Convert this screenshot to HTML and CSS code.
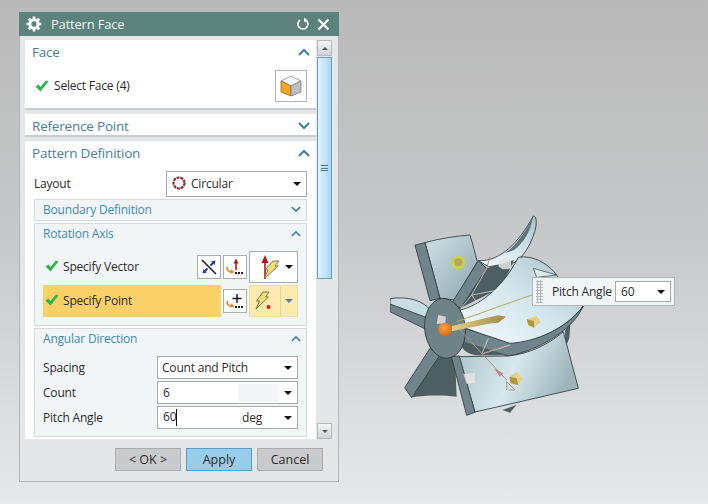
FILE: index.html
```html
<!DOCTYPE html>
<html lang="en">
  <head>
    <meta charset="UTF-8" />
    <title>Pattern Face</title>
    <link rel="stylesheet" href="styles.css">
  </head>
  <body>
    <!-- dialog window -->
    <div class="dialog">
      <div class="titlebar">
        <svg class="gear" width="16" height="16" viewBox="0 0 14 14">
          <path class="gear-teeth" d="M7 0.500v2.500M7 11v2.500M0.500 7h2.500M11 7h2.500M2.400 2.400l1.800 1.800M9.800 9.800l1.800 1.800M2.400 11.600l1.800-1.800M9.800 4.200l1.800-1.800" />
          <circle class="gear-ring" cx="7" cy="7" r="3.600" />
        </svg>
        <span class="dialog-title">Pattern Face</span>
        <svg class="reset" width="14" height="14" viewBox="0 0 14 14">
          <path class="title-stroke" d="M9.500 2.800A5 5 0 1 1 4 3" />
          <path class="title-fill" d="M8 0.500v5l3.400-2.200z" />
        </svg>
        <svg class="close" width="13" height="13" viewBox="0 0 13 13">
          <path class="close-x" d="M1.500 1.500l10 10M11.500 1.500l-10 10" />
        </svg>
      </div>

      <div class="main">
        <div class="panel">
          <section class="section section-face">
            <div class="section-head">
              <span>Face</span>
              <svg class="chev" width="12" height="8" viewBox="0 0 12 8"><path d="M1 7l5-5 5 5" /></svg>
            </div>
            <div class="face-row">
              <svg class="check" width="14" height="12" viewBox="0 0 14 12"><path d="M0.500 6.500l3-2 2 2.500L11 0.500l2.500 1L5.500 11.500z" /></svg>
              <span class="face-label">Select Face (4)</span>
              <div class="cube-btn">
                <svg width="24" height="24" viewBox="0 0 24 24">
                  <path class="cube-top" d="M12 2l10 5-10 5L2 7z" />
                  <path class="cube-left" d="M2 7l10 5v10L2 18z" />
                  <path class="cube-right" d="M22 7l-10 5v10l10-4z" />
                </svg>
              </div>
            </div>
          </section>

          <section class="section">
            <div class="section-head">
              <span>Reference Point</span>
              <svg class="chev" width="12" height="8" viewBox="0 0 12 8"><path d="M1 1l5 5 5-5" /></svg>
            </div>
          </section>

          <section class="section section-pattern">
            <div class="section-head">
              <span>Pattern Definition</span>
              <svg class="chev" width="12" height="8" viewBox="0 0 12 8"><path d="M1 7l5-5 5 5" /></svg>
            </div>
            <div class="layout-row">
              <span class="layout-label">Layout</span>
              <div class="field field-layout">
                <svg class="ring" width="16" height="16" viewBox="0 0 16 16">
                  <circle cx="8" cy="8" r="5.500" />
                </svg>
                <span>Circular</span>
                <i class="caret"></i>
              </div>
            </div>

            <div class="group group-closed">
              <div class="group-head">
                <span>Boundary Definition</span>
                <svg class="chev" width="10" height="7" viewBox="0 0 12 8"><path d="M1 1l5 5 5-5" /></svg>
              </div>
            </div>

            <div class="group group-axis">
              <div class="group-head">
                <span>Rotation Axis</span>
                <svg class="chev" width="10" height="7" viewBox="0 0 12 8"><path d="M1 7l5-5 5 5" /></svg>
              </div>
              <div class="axis-row">
                <div class="axis-label">
                  <svg class="check" width="14" height="12" viewBox="0 0 14 12"><path d="M0.500 6.500l3-2 2 2.500L11 0.500l2.500 1L5.500 11.500z" /></svg>
                  <span>Specify Vector</span>
                </div>
                <div class="tool">
                  <svg width="20" height="20" viewBox="0 0 20 20">
                    <path class="ico-black" d="M3 3l14 14" />
                    <path class="ico-blue" d="M16.500 3.500l-4.500 1 3.500 3.500zM3.500 16.500l4.500-1-3.500-3.500z" />
                    <path class="ico-blue-line" d="M14 6l-2.500 2.500M6 14l2.500-2.500" />
                  </svg>
                </div>
                <div class="tool">
                  <svg width="20" height="20" viewBox="0 0 20 20">
                    <path class="ico-orange" d="M2 10c0 4 2 5 5 5M5 16l3-1-2-2" />
                    <path class="ico-red" d="M11 13V6" />
                    <path class="ico-red-fill" d="M11 1.500l-2.500 5h5z" />
                    <path class="ico-dots" d="M10 16h2M13 16h2M16 16h2" />
                  </svg>
                </div>
                <div class="tool tool-wide">
                  <svg width="30" height="30" viewBox="0 0 30 30">
                    <path class="ico-red" d="M11 27V9" />
                    <path class="ico-red-fill" d="M11 3l-3.500 8h7z" />
                    <path class="bolt" d="M19 9h6l-4 5h3L10 27l4-9h-3z" />
                  </svg>
                  <i class="caret caret-tool"></i>
                </div>
              </div>
              <div class="axis-row">
                <div class="axis-label axis-active">
                  <svg class="check" width="14" height="12" viewBox="0 0 14 12"><path d="M0.500 6.500l3-2 2 2.500L11 0.500l2.500 1L5.500 11.500z" /></svg>
                  <span>Specify Point</span>
                </div>
                <div class="tool">
                  <svg width="20" height="20" viewBox="0 0 20 20">
                    <path class="ico-orange" d="M2 10c0 4 2 5 5 5M5 16l3-1-2-2" />
                    <path class="ico-black" d="M12 3v9M7.500 7.500h9" />
                    <path class="ico-dots" d="M10 16h2M13 16h2M16 16h2" />
                  </svg>
                </div>
                <div class="tool-split">
                  <div class="split-main">
                    <svg width="24" height="28" viewBox="0 0 24 28">
                      <path class="bolt" d="M10 5h6l-3.500 5h3L3 22l3.500-8h-3z" />
                      <circle class="ico-dot" cx="15.500" cy="20" r="2" />
                    </svg>
                  </div>
                  <div class="split-arrow"><i class="caret caret-blue"></i></div>
                </div>
              </div>
            </div>

            <div class="group group-angular">
              <div class="group-head">
                <span>Angular Direction</span>
                <svg class="chev" width="10" height="7" viewBox="0 0 12 8"><path d="M1 7l5-5 5 5" /></svg>
              </div>
              <div class="form-row">
                <span>Spacing</span>
                <div class="field field-form"><span>Count and Pitch</span><i class="caret"></i></div>
              </div>
              <div class="form-row">
                <span>Count</span>
                <div class="field field-form">
                  <span class="value">6</span>
                  <i class="patch"></i>
                  <i class="caret"></i>
                </div>
              </div>
              <div class="form-row">
                <span>Pitch Angle</span>
                <div class="field field-form">
                  <span class="value value-edit">60</span>
                  <span class="unit">deg</span>
                  <i class="caret"></i>
                </div>
              </div>
            </div>
          </section>
        </div>

        <div class="scrollbar">
          <div class="scroll-btn"><i class="scroll-up"></i></div>
          <div class="scroll-thumb"><i class="grip"></i></div>
          <div class="scroll-track"></div>
          <div class="scroll-btn"><i class="scroll-down"></i></div>
        </div>
      </div>

      <div class="footer">
        <button class="btn">&lt; OK &gt;</button>
        <button class="btn btn-apply">Apply</button>
        <button class="btn">Cancel</button>
      </div>
    </div>

    <!-- impeller model, coordinates are 3x screen pixels -->
    <svg class="model" width="300" height="230" viewBox="0 0 900 690">
      <defs>
        <linearGradient id="blade" x1="0" y1="0" x2="1" y2="0.300">
          <stop offset="0" stop-color="#a9bfc6" />
          <stop offset="0.550" stop-color="#d6e8ee" />
          <stop offset="1" stop-color="#9fb5bc" />
        </linearGradient>
        <linearGradient id="bladeBack" x1="0" y1="0" x2="1" y2="1">
          <stop offset="0" stop-color="#cfe2e8" />
          <stop offset="1" stop-color="#8fa6ad" />
        </linearGradient>
        <linearGradient id="curve" x1="0" y1="1" x2="1" y2="0">
          <stop offset="0" stop-color="#f4fbfd" />
          <stop offset="0.500" stop-color="#d5e7ee" />
          <stop offset="1" stop-color="#a8c0c8" />
        </linearGradient>
        <linearGradient id="cone" x1="0" y1="0" x2="1" y2="0">
          <stop offset="0" stop-color="#e6cf84" />
          <stop offset="1" stop-color="#a08a45" />
        </linearGradient>
        <radialGradient id="ball" cx="0.400" cy="0.350" r="0.700">
          <stop offset="0" stop-color="#f7a44a" />
          <stop offset="1" stop-color="#d96a08" />
        </radialGradient>
      </defs>

      <!-- back blades -->
      <path class="dark" d="M338 630l42-16-20 24z" />
      <path class="dark" d="M525 392l17-28-4 50-12 30z" />
      <path class="face-back" d="M105 128C150 115 200 108 240 105C248 130 255 160 262 185L195 300L150 295z" />
      <path class="edge" d="M75 135L105 128L150 295L120 302z" />

      <!-- curved blade, top right -->
      <path class="face-curve" d="M265 182C330 185 385 130 430 48C442 50 440 75 434 95C420 140 400 170 372 188L296 200z" />
      <path class="edge-soft" d="M345 160C380 135 410 90 430 48C422 95 400 130 372 150z" />
      <path class="dark" d="M290 205L372 180L335 262L205 328z" />

      <!-- large curved blade -->
      <path class="face-curve" d="M385 172C430 165 480 190 510 240C530 270 560 300 578 320C545 365 470 420 360 435L215 380L210 330C260 320 335 270 385 172z" />
      <path class="edge" d="M225 385L360 430C440 425 530 385 580 318L565 345C530 395 450 450 355 468L222 432z" />

      <!-- lower blades -->
      <path class="dark" d="M65 592C110 585 160 585 200 590L195 470L145 470z" />
      <path class="edge" d="M44 563L120 445L148 468L65 593z" />
      <path class="face-bottom" d="M206 470L354 468C420 462 480 430 520 395L565 565L255 636z" />
      <path class="edge" d="M184 470L208 468L255 637L230 646z" />
      <path class="dark" d="M205 420L355 466L280 466C250 468 225 458 215 440z" />

      <!-- left blade -->
      <path class="edge" d="M0 310L120 350L108 388L0 335z" />
      <path class="face-left" d="M0 296C50 288 100 300 122 332L108 352L0 312z" />

      <!-- blade running from hub to top -->
      <path class="edge" d="M185 310L265 182L290 205L212 325z" />

      <!-- hub -->
      <ellipse class="hub" cx="165" cy="385" rx="61" ry="90" transform="rotate(-6 165 385)" />

      <!-- handles -->
      <path class="line-white" d="M290 205L245 285L212 325M245 285L335 268M245 285L320 395M360 435L275 462L295 415M330 268L300 335" />
      <path class="line-olive" d="M200 365L430 283" />
      <path class="line-pink" d="M205 385L350 540M300 170L290 205L275 225M355 570L375 570L350 545V570M275 462L350 435" />
      <path class="tri" d="M430 205L500 225L440 232z" />
      <path class="cone" d="M185 378L305 350L325 346L348 350L325 368L305 370L185 394z" />
      <path class="cone-pink" d="M312 505L340 520L330 530z" />

      <circle class="knob-lime" cx="205" cy="188" r="21" />
      <circle class="knob-tan" cx="205" cy="187" r="12" />

      <path class="block" d="M326 180L350 174L363 182V206L338 208L326 200z" />
      <path class="block" d="M220 522L255 520V548L230 552z" />
      <path class="block" d="M145 345L168 350L165 370L140 372z" />

      <path class="gold-a" d="M410 358L440 347L452 366L432 383L415 375z" />
      <path class="gold-b" d="M410 358L432 363L432 383L415 375z" />
      <path class="gold-a" d="M358 530L380 516L398 535L385 555L362 550z" />
      <path class="gold-b" d="M358 530L380 535L385 555L362 550z" />

      <circle cx="165" cy="388" r="20" fill="url(#ball)" />
    </svg>

    <!-- floating input -->
    <div class="popup">
      <i class="popup-grip"></i>
      <span class="popup-label">Pitch Angle</span>
      <div class="field field-popup"><span class="value">60</span><i class="caret"></i></div>
    </div>
  </body>
</html>
```

FILE: styles.css
```css
* {
  box-sizing: border-box;
}

html,
body {
  height: 504px;
}

body {
  margin: 0;
  position: relative;
  overflow: hidden;
  background: linear-gradient(#b9b9b9, #c6c7c8 45%, #e6e8e9);
  font-family: "Open Sans", "Noto Sans", sans-serif;
  font-size: 12px;
  letter-spacing: -0.2px;
  color: #2b2b2b;
}

svg {
  display: block;
  flex: none;
}

/* dialog */
.dialog {
  position: absolute;
  left: 19px;
  top: 12px;
  width: 320px;
  height: 470px;
  display: flex;
  flex-direction: column;
  background: #e4e6e8;
  border: 1px solid #aeb4b7;
  border-top: 0;
}

.titlebar {
  height: 24px;
  margin: 0 -1px;
  display: flex;
  align-items: center;
  padding: 0 9px 0 7px;
  background: #5b827b;
  color: #f1f5f4;
}

.dialog-title {
  margin-left: 9px;
  font-size: 13px;
  flex: 1;
}

.gear-teeth {
  stroke: #fff;
  stroke-width: 2.400;
  fill: none;
}

.gear-ring {
  stroke: #fff;
  stroke-width: 2.600;
  fill: #5b827b;
}

.title-stroke {
  stroke: #fff;
  stroke-width: 1.600;
  fill: none;
}

.title-fill {
  fill: #fff;
}

.reset {
  margin-right: 7px;
}

.close-x {
  stroke: #fff;
  stroke-width: 2.200;
  fill: none;
}

.main {
  display: flex;
  padding: 4px 0 0 5px;
  height: 403px;
}

.panel {
  width: 291px;
  display: flex;
  flex-direction: column;
  gap: 4px;
}

.section {
  background: #fff;
  border-bottom: 2px solid #c9cdd0;
  height: 23px;
}

.section-face {
  height: 70px;
}

.section-pattern {
  flex: 1;
  border-bottom: 0;
  padding: 0 9px;
}

.section-head {
  height: 24px;
  display: flex;
  align-items: center;
  justify-content: space-between;
  padding: 0 6px 0 7px;
  font-size: 13.500px;
  color: #4a8096;
}

.section-pattern .section-head {
  margin: 0 -9px;
}

.chev path {
  fill: none;
  stroke: #3f7ea3;
  stroke-width: 2;
}

.face-row {
  display: flex;
  align-items: center;
  padding: 6px 9px 0 10px;
}

.face-label {
  margin-left: 5px;
  flex: 1;
  padding-bottom: 1px;
}

.check path {
  fill: #2bb54a;
}

.cube-btn {
  width: 32px;
  height: 32px;
  border: 1px solid #b4b4b4;
  display: flex;
  align-items: center;
  justify-content: center;
}

.cube-top {
  fill: #f4f4f4;
  stroke: #8c8c8c;
  stroke-width: 0.800;
}

.cube-left {
  fill: #f5a623;
  stroke: #8c6a3c;
  stroke-width: 0.800;
}

.cube-right {
  fill: #bdbfc4;
  stroke: #7c7c7c;
  stroke-width: 0.800;
}

/* inputs */
.layout-row {
  display: flex;
  align-items: center;
  justify-content: space-between;
  height: 26px;
  margin: 6px 0 2px;
}

.layout-label {
  padding-bottom: 2px;
}

.field {
  display: flex;
  align-items: center;
  position: relative;
  background: #fff;
  border: 1px solid #a8a8a8;
  padding-left: 4px;
  padding-bottom: 1px;
}

.field-layout {
  width: 141px;
  height: 26px;
  padding-bottom: 2px;
}

.field-form {
  width: 141px;
  height: 23px;
}

.ring {
  margin-right: 4px;
}

.ring circle {
  fill: none;
  stroke: #8a2a2a;
  stroke-width: 2.200;
  stroke-dasharray: 3 0.800;
}

.caret {
  position: absolute;
  right: 5px;
  top: 50%;
  margin-top: -2px;
  border-style: solid;
  border-width: 4px 4px 0;
  border-color: #111 transparent transparent;
}

.caret-blue {
  border-top-color: #4b84a8;
  right: 4px;
}

.caret-tool {
  right: 4px;
}

.value {
  padding-left: 1px;
}

.value-edit {
  border-right: 1px solid #111;
  height: 17px;
  line-height: 16px;
}

.unit {
  position: absolute;
  left: 84px;
}

.patch {
  position: absolute;
  left: 80px;
  top: 2px;
  width: 41px;
  height: 18px;
  background: #f3f5f6;
}

/* inner groups */
.group {
  background: #f2f5f6;
  border: 1px solid #d5dadd;
  margin-bottom: 2px;
}

.group-closed {
  height: 22px;
}

.group-axis {
  height: 103px;
}

.group-angular {
  height: 109px;
}

.group-head {
  height: 20px;
  display: flex;
  align-items: center;
  justify-content: space-between;
  padding: 0 5px 2px 8px;
  color: #3f8bb3;
}

.group-axis .group-head {
  margin-bottom: 7px;
}

.group-angular .group-head {
  margin-bottom: 7px;
}

.axis-row {
  display: flex;
  align-items: center;
  gap: 2px;
  height: 32px;
  margin: 0 0 2px 8px;
}

.axis-label {
  width: 152px;
  height: 32px;
  display: flex;
  align-items: center;
  gap: 4px;
  padding: 0 0 2px 2px;
}

.axis-active {
  width: 178px;
  background: #fad167;
}

.tool {
  width: 24px;
  height: 24px;
  background: #fff;
  border: 1px solid #a9aeb3;
  display: flex;
  align-items: center;
  justify-content: center;
  position: relative;
}

.tool-wide {
  width: 49px;
  height: 32px;
  justify-content: flex-start;
  padding-left: 4px;
}

.tool-split {
  width: 49px;
  height: 32px;
  display: flex;
  background: #fdeab0;
  border: 1px solid #f2dc9e;
}

.split-main {
  width: 31px;
  border-right: 1px solid #ecd28c;
  display: flex;
  align-items: center;
  justify-content: center;
}

.split-arrow {
  flex: 1;
  position: relative;
}

.ico-black {
  stroke: #111;
  stroke-width: 1.400;
  fill: none;
}

.ico-blue {
  fill: #1c3aa8;
}

.ico-blue-line {
  stroke: #1c3aa8;
  stroke-width: 2;
  fill: none;
}

.ico-orange {
  stroke: #e8872a;
  stroke-width: 1.600;
  fill: none;
}

.ico-red {
  stroke: #b01818;
  stroke-width: 1.600;
  fill: none;
}

.ico-red-fill {
  fill: #b01818;
}

.ico-dots {
  stroke: #222;
  stroke-width: 2;
  fill: none;
}

.ico-dot {
  fill: #cf1f1f;
}

.bolt {
  fill: #efe07a;
  stroke: #6f6a3a;
  stroke-width: 0.900;
}

.form-row {
  display: flex;
  align-items: center;
  justify-content: space-between;
  height: 23px;
  margin: 0 8px 2px;
}

/* scrollbar */
.scrollbar {
  width: 15px;
  margin-left: 1px;
  display: flex;
  flex-direction: column;
}

.scroll-btn {
  height: 16px;
  background: linear-gradient(#f5f6f7, #cfd2d4);
  border: 1px solid #b5b9bc;
  display: flex;
  align-items: center;
  justify-content: center;
}

.scroll-up {
  border-style: solid;
  border-width: 0 3px 3px;
  border-color: transparent transparent #555;
}

.scroll-down {
  border-style: solid;
  border-width: 3px 3px 0;
  border-color: #555 transparent transparent;
}

.scroll-thumb {
  height: 222px;
  margin-top: 1px;
  background: linear-gradient(90deg, #e3f2fc, #a9d6f5);
  border: 1px solid #6d9dc0;
  display: flex;
  align-items: center;
  justify-content: center;
}

.grip {
  width: 7px;
  height: 6px;
  border-top: 1px solid #4f7f9f;
  border-bottom: 1px solid #4f7f9f;
  background: linear-gradient(#4f7f9f, #4f7f9f) center / 100% 1px no-repeat;
}

.scroll-track {
  flex: 1;
}

/* bottom buttons */
.footer {
  display: flex;
  justify-content: flex-end;
  gap: 5px;
  padding: 9px 15px 0 0;
}

.btn {
  width: 66px;
  height: 23px;
  padding: 0;
  font: inherit;
  font-size: 12.500px;
  color: #2b2b2b;
  background: #c8cacc;
  border: 1px solid #a9abad;
}

.btn-apply {
  background: #97cdea;
  border-color: #5c9cc2;
}

/* model */
.model {
  position: absolute;
  left: 390px;
  top: 200px;
}

.dark {
  fill: #4e5f63;
}

.edge {
  fill: #6f858b;
  stroke: #2f3d42;
  stroke-width: 2.600;
  stroke-linejoin: round;
}

.edge-soft {
  fill: #5f767c;
}

.face-back {
  fill: url(#bladeBack);
  stroke: #2f3d42;
  stroke-width: 2.600;
}

.face-curve {
  fill: url(#curve);
  stroke: #2f3d42;
  stroke-width: 2.600;
}

.face-bottom {
  fill: url(#blade);
  stroke: #2f3d42;
  stroke-width: 2.600;
}

.face-left {
  fill: #c9dde4;
  stroke: #2f3d42;
  stroke-width: 2.600;
}

.hub {
  fill: #6e8288;
  stroke: #2f3d42;
  stroke-width: 2.600;
}

.line-white {
  fill: none;
  stroke: #e6e8e6;
  stroke-width: 2.500;
  opacity: 0.850;
}

.line-olive {
  stroke: #b5ad62;
  stroke-width: 3;
}

.line-pink {
  fill: none;
  stroke: #b98a8a;
  stroke-width: 3;
}

.tri {
  fill: #dfeaee;
  stroke: #2f3d42;
  stroke-width: 2;
}

.cone {
  fill: url(#cone);
}

.cone-pink {
  fill: #c98480;
}

.knob-lime {
  fill: #c9d33f;
}

.knob-tan {
  fill: #b9a56c;
}

.block {
  fill: #e4e4e2;
  opacity: 0.850;
}

.gold-a {
  fill: #e3cf8c;
}

.gold-b {
  fill: #b2953f;
}

/* floating input */
.popup {
  position: absolute;
  left: 532px;
  top: 277px;
  width: 143px;
  height: 29px;
  display: flex;
  align-items: center;
  background: #f2f5f6;
  border: 1px solid #b0b6ba;
}

.popup-grip {
  width: 7px;
  height: 23px;
  margin-left: 3px;
  background-image: radial-gradient(#b4b8ba 1px, transparent 1.200px);
  background-size: 3px 3px;
}

.popup-label {
  margin-left: 9px;
  width: 63px;
  white-space: nowrap;
}

.field-popup {
  width: 56px;
  height: 21px;
  margin-left: 0;
}
```
